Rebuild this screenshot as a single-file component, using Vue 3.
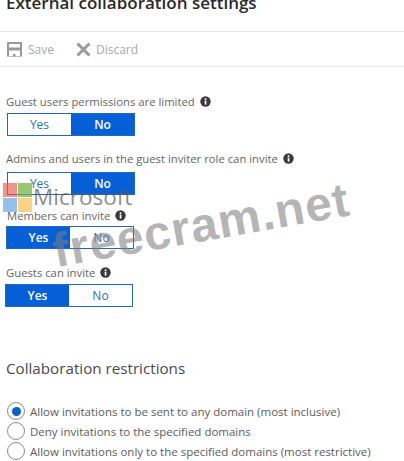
<script setup>
const fields = [
  { label: 'Guest users permissions are limited', value: 'No', cls: 'f1' },
  { label: 'Admins and users in the guest inviter role can invite', value: 'No', cls: 'f2' },
  { label: 'Members can invite', value: 'Yes', cls: 'f3' },
  { label: 'Guests can invite', value: 'Yes', cls: 'f4' },
]
const options = [
  { label: 'Allow invitations to be sent to any domain (most inclusive)', on: true },
  { label: 'Deny invitations to the specified domains', on: false },
  { label: 'Allow invitations only to the specified domains (most restrictive)', on: false },
]
</script>

<template>
  <div class="page">
    <h1 class="title">External collaboration settings</h1>
    <div class="toolbar">
      <div class="tool">
        <svg width="17" height="17" viewBox="0 0 17 17" class="ico">
          <path d="M2 16V2h13v14" fill="none" stroke="#9a9a9a" stroke-width="2" />
          <path d="M1 8h15" fill="none" stroke="#9a9a9a" stroke-width="3" />
          <path d="M1 15.5h15" fill="none" stroke="#c4c4c4" stroke-width="1" />
          <rect x="7" y="13" width="2.5" height="2.5" fill="#9a9a9a" />
        </svg>
        <span>Save</span>
      </div>
      <div class="tool discard">
        <svg width="15" height="15" viewBox="0 0 15 15" class="ico">
          <path d="M1.5 1.5l12 12M13.5 1.5l-12 12" fill="none" stroke="#9a9a9a" stroke-width="3" />
        </svg>
        <span>Discard</span>
      </div>
    </div>

    <div v-for="f in fields" :key="f.label" class="field" :class="f.cls">
      <div class="label">
        {{ f.label }}
        <svg class="info" width="11" height="11" viewBox="0 0 11 11">
          <circle cx="5.5" cy="5.5" r="5.2" fill="#3a3a3a" />
          <rect x="4.7" y="4.6" width="1.7" height="4" fill="#fff" />
          <rect x="4.7" y="2.3" width="1.7" height="1.6" fill="#fff" />
        </svg>
      </div>
      <div class="toggle">
        <div class="seg" :class="{ on: f.value === 'Yes' }">Yes</div>
        <div class="seg" :class="{ on: f.value === 'No' }">No</div>
      </div>
    </div>

    <h2 class="heading">Collaboration restrictions</h2>

    <div class="radios">
      <div v-for="o in options" :key="o.label" class="radio">
        <span class="circle"><span v-if="o.on" class="dot"></span></span>
        <span>{{ o.label }}</span>
      </div>
    </div>

    <div class="mark-ms">
      <div class="squares">
        <i class="s-red"></i><i class="s-green"></i><i class="s-blue"></i><i class="s-yellow"></i>
      </div>
      <span>Microsoft</span>
    </div>
    <div class="mark-free">freecram.net</div>
  </div>
</template>

<style>
html, body { margin: 0; background: #fff; }
</style>

<style scoped>
.page {
  position: relative;
  width: 404px;
  height: 461px;
  overflow: hidden;
  background: #fff;
  font-family: "Open Sans", "Noto Sans", sans-serif;
  color: #555;
}
.title {
  margin: 0;
  height: 32px;
  padding-left: 6px;
  box-sizing: border-box;
  font-size: 17px;
  line-height: 5px;
  font-weight: 600;
  color: #2a2a2a;
  white-space: nowrap;
  border-bottom: 1px solid #e2e2e2;
}
.toolbar {
  display: flex;
  align-items: center;
  height: 35px;
  box-sizing: border-box;
  padding: 1px 0 0 6px;
  border-bottom: 1px solid #e6e6e6;
  color: #a8a8a8;
  font-size: 12px;
}
.tool { display: flex; align-items: center; gap: 5px; }
.discard { margin-left: 22px; gap: 5px; }
.ico { display: block; }
.field { display: flex; flex-direction: column; }
.f1 { margin: 24px 0 0 7px; }
.f2 { margin: 12px 0 0 7px; }
.f3 { margin: 10px 0 0 6px; }
.f4 { margin: 13px 0 0 5px; }
.label {
  height: 20px;
  display: flex;
  align-items: center;
  gap: 5px;
  margin-left: -1px;
  font-size: 11.3px;
  color: #666;
  white-space: nowrap;
}
.f1 .label { margin-bottom: 2px; }
.f2 .label { margin-bottom: 4px; }
.f3 .label { margin-left: 1px; margin-bottom: 1px; }
.f4 .label { margin-left: 1px; margin-bottom: 2px; }
.info { flex: none; }
.toggle {
  display: flex;
  width: 128px;
  height: 23px;
  box-sizing: border-box;
  border: 1px solid #2566b8;
}
.seg {
  flex: 1;
  display: flex;
  align-items: center;
  justify-content: center;
  font-size: 12px;
  color: #2f6fb5;
  background: #fff;
}
.seg.on {
  background: #0560d8;
  color: #fff;
  font-weight: 600;
}
.heading {
  margin: 51px 0 0 6px;
  font-size: 15.2px;
  line-height: 20px;
  font-weight: 400;
  color: #4a4a4a;
}
.radios { margin: 25px 0 0 7px; display: flex; flex-direction: column; gap: 4px; }
.radio {
  display: flex;
  align-items: center;
  gap: 5px;
  height: 16px;
  font-size: 11.5px;
  color: #5c5c5c;
  white-space: nowrap;
}
.circle {
  flex: none;
  width: 18px;
  height: 18px;
  box-sizing: border-box;
  border: 1px solid #8c8c8c;
  border-radius: 50%;
  display: flex;
  align-items: center;
  justify-content: center;
  background: #fff;
}
.dot { width: 9px; height: 9px; border-radius: 50%; background: #0a62c8; }
.mark-ms {
  position: absolute;
  left: 3px;
  top: 184px;
  display: flex;
  align-items: flex-start;
  gap: 1px;
  color: rgba(90, 90, 90, .7);
  font-size: 22.5px;
  line-height: 26px;
  pointer-events: none;
}
.squares {
  display: grid;
  grid-template-columns: 14px 14px;
  grid-auto-rows: 14px;
  gap: 1px;
  margin-top: -1px;
}
.squares i { display: block; }
.s-red { background: rgba(232, 90, 80, .65); }
.s-green { background: rgba(120, 180, 70, .75); }
.s-blue { background: rgba(90, 160, 225, .65); }
.s-yellow { background: rgba(250, 190, 80, .7); }
.mark-free {
  position: absolute;
  left: 58px;
  top: 224px;
  font-family: "Liberation Sans", sans-serif;
  font-weight: 700;
  font-size: 48px;
  line-height: 54px;
  letter-spacing: 1px;
  color: rgba(125, 125, 125, .58);
  transform: rotate(-10deg);
  transform-origin: left bottom;
  white-space: nowrap;
  pointer-events: none;
}
</style>
